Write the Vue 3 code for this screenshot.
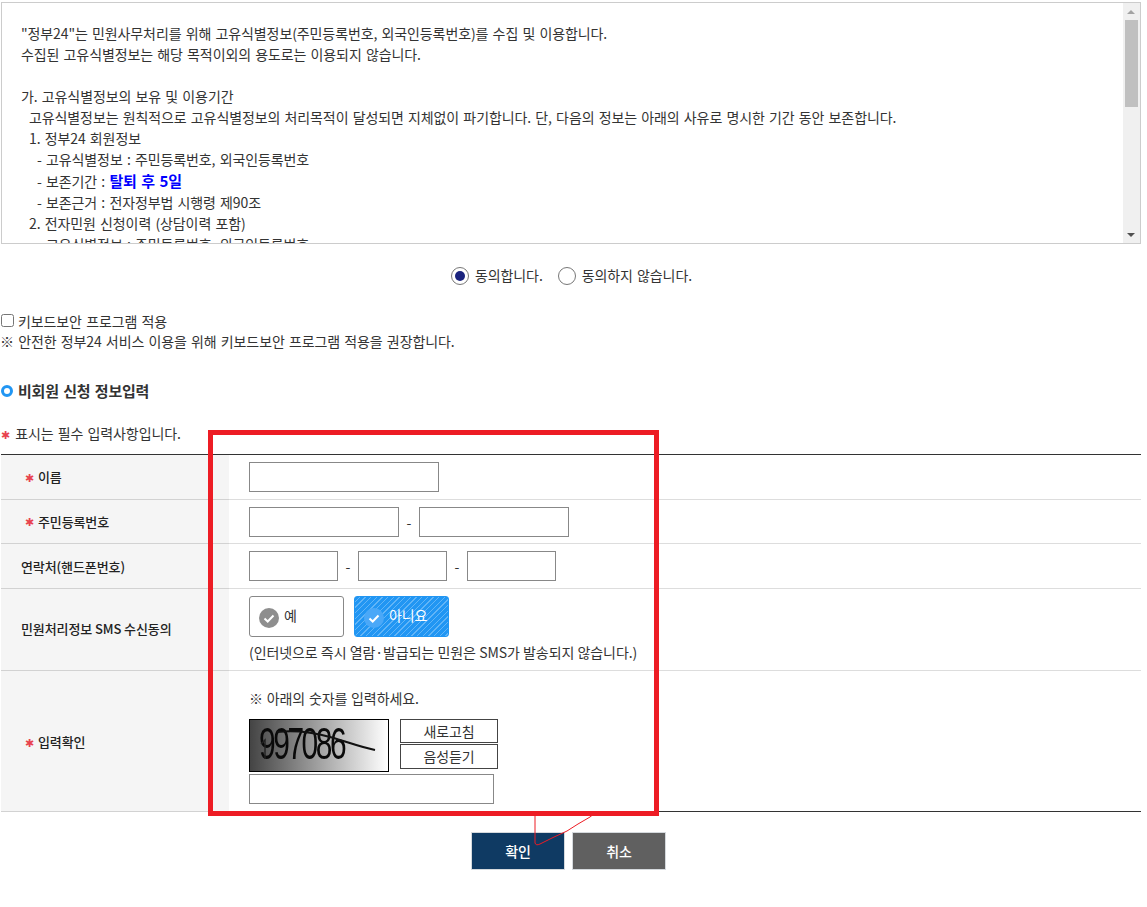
<script setup>
const lines = [
  { t: '"정부24"는 민원사무처리를 위해 고유식별정보(주민등록번호, 외국인등록번호)를 수집 및 이용합니다.', c: '' },
  { t: '수집된 고유식별정보는 해당 목적이외의 용도로는 이용되지 않습니다.', c: '' },
  { t: '\u00a0', c: '' },
  { t: '가. 고유식별정보의 보유 및 이용기간', c: '' },
  { t: '고유식별정보는 원칙적으로 고유식별정보의 처리목적이 달성되면 지체없이 파기합니다. 단, 다음의 정보는 아래의 사유로 명시한 기간 동안 보존합니다.', c: 'i1' },
  { t: '1. 정부24 회원정보', c: 'i1' },
  { t: '- 고유식별정보 : 주민등록번호, 외국인등록번호', c: 'i2' },
  { t: '- 보존기간 : ', b: '탈퇴 후 5일', c: 'i2' },
  { t: '- 보존근거 : 전자정부법 시행령 제90조', c: 'i2' },
  { t: '2. 전자민원 신청이력 (상담이력 포함)', c: 'i1' },
  { t: '- 고유식별정보 : 주민등록번호, 외국인등록번호', c: 'i2' }
]
</script>

<template>
  <div class="page">
    <section class="terms">
      <div class="terms-text">
        <p v-for="(l, i) in lines" :key="i" :class="l.c">{{ l.t }}<strong v-if="l.b" class="hl">{{ l.b }}</strong></p>
      </div>
      <div class="sbar">
        <span class="arrow up"></span>
        <span class="thumb"></span>
        <span class="arrow down"></span>
      </div>
    </section>

    <div class="agree">
      <span class="radio on"></span><span class="rlabel">동의합니다.</span>
      <span class="radio"></span><span class="rlabel">동의하지 않습니다.</span>
    </div>

    <label class="kbd"><input type="checkbox" class="chk" />키보드보안 프로그램 적용</label>
    <p class="kbd-note">※ 안전한 정부24 서비스 이용을 위해 키보드보안 프로그램 적용을 권장합니다.</p>

    <h2 class="title"><span class="ring"></span>비회원 신청 정보입력</h2>
    <p class="req"><span class="star">✱</span> 표시는 필수 입력사항입니다.</p>

    <div class="form">
      <div class="row r1">
        <div class="th req-th"><span class="star">✱</span> 이름</div>
        <div class="td"><input class="inp w190" /></div>
      </div>
      <div class="row r2">
        <div class="th req-th"><span class="star">✱</span> 주민등록번호</div>
        <div class="td"><input class="inp w150" /><span class="dash">-</span><input class="inp w150" /></div>
      </div>
      <div class="row r3">
        <div class="th">연락처(핸드폰번호)</div>
        <div class="td"><input class="inp w89" /><span class="dash">-</span><input class="inp w89" /><span class="dash">-</span><input class="inp w89" /></div>
      </div>
      <div class="row r4">
        <div class="th">민원처리정보 SMS 수신동의</div>
        <div class="td col">
          <div class="choices">
            <div class="choice">
              <span class="tick"><svg viewBox="0 0 20 20" width="20" height="20"><path d="M5.5 10.5l3.2 3 5.8-6" fill="none" stroke="#fff" stroke-width="2"/></svg></span>예
            </div>
            <div class="choice sel">
              <span class="tick"><svg viewBox="0 0 20 20" width="20" height="20"><path d="M5.5 10.5l3.2 3 5.8-6" fill="none" stroke="#fff" stroke-width="2"/></svg></span>아니요
            </div>
          </div>
          <p class="sms">(인터넷으로 즉시 열람·발급되는 민원은 SMS가 발송되지 않습니다.)</p>
        </div>
      </div>
      <div class="row r5">
        <div class="th req-th"><span class="star">✱</span> 입력확인</div>
        <div class="td col">
          <p class="cap-note">※ 아래의 숫자를 입력하세요.</p>
          <div class="cap-row">
            <div class="cap-img">
              <span class="cap-text">997086</span>
              <svg class="cap-line" viewBox="0 0 138 51" width="138" height="51">
                <path d="M27 12C45 10 62 12 80 17S110 27 125 30" fill="none" stroke="#111" stroke-width="2.2"/>
                <path d="M11 24L15 20V39" fill="none" stroke="#222" stroke-width="1.4"/>
              </svg>
            </div>
            <div class="cap-btns">
              <div class="cap-btn">새로고침</div>
              <div class="cap-btn">음성듣기</div>
            </div>
          </div>
          <input class="inp w245" />
        </div>
      </div>
    </div>

    <div class="actions">
      <div class="btn ok">확인</div>
      <div class="btn cancel">취소</div>
    </div>

    <div class="mark"></div>
    <svg class="scribble" viewBox="0 0 70 40" width="70" height="40"><path d="M5 5V34Q6 37 10 35L22 29 37 22 48 15 60 8 65 4" fill="none" stroke="#ed1c24" stroke-width="1"/></svg>
  </div>
</template>

<style>
html, body { margin: 0; background: #fff; }
</style>

<style scoped>
.page {
  position: relative;
  width: 1147px;
  height: 907px;
  overflow: hidden;
  padding-top: 2px;
  box-sizing: border-box;
  font-family: "Noto Sans CJK KR", "Noto Sans", sans-serif;
  font-size: 14px;
  color: #333;
  letter-spacing: -0.1px;
  word-spacing: 1.2px;
}
p, h2 { margin: 0; font-weight: 400; }
.terms {
  margin-left: 1px;
  width: 1140px;
  height: 242px;
  box-sizing: border-box;
  border: 1px solid #ccc;
  display: flex;
  overflow: hidden;
}
.terms-text {
  flex: 1;
  padding: 20px 0 0 19px;
  line-height: 21px;
  white-space: nowrap;
  overflow: hidden;
}
.i1 { padding-left: 8px; }
.i2 { padding-left: 16px; }
.hl { color: #00f; font-size: 15px; font-weight: 700; }
.sbar {
  width: 17px;
  background: #f0f0f0;
  position: relative;
  flex: none;
}
.thumb {
  position: absolute;
  left: 2px;
  top: 17px;
  width: 13px;
  height: 87px;
  background: #c0c0c0;
}
.arrow {
  position: absolute;
  left: 4px;
  width: 0;
  height: 0;
  border-left: 4px solid transparent;
  border-right: 4px solid transparent;
}
.up { top: 7px; border-bottom: 4px solid #a3a3a3; }
.down { bottom: 6px; border-top: 4px solid #505050; }

.agree {
  height: 18px;
  margin-top: 23px;
  margin-left: 451px;
  display: flex;
  align-items: center;
}
.radio {
  width: 18px;
  height: 18px;
  box-sizing: border-box;
  border: 1px solid #777;
  border-radius: 50%;
  background: #fff;
  margin-right: 6px;
  position: relative;
  flex: none;
}
.radio.on::after {
  content: "";
  position: absolute;
  inset: 3px;
  border-radius: 50%;
  background: #1a237e;
}
.rlabel { margin-right: 15px; position: relative; top: -1px; }

.kbd {
  display: flex;
  align-items: center;
  margin-top: 25px;
  height: 21px;
  color: #333;
}
.chk {
  width: 13px;
  height: 13px;
  margin: 0 4px 0 1px;
}
.kbd-note {
  line-height: 21px;
}
.title {
  display: flex;
  align-items: center;
  margin-top: 28px;
  height: 21px;
  font-size: 15px;
  font-weight: 700;
  padding-left: 1px;
  letter-spacing: -0.2px;
}
.ring {
  width: 12px;
  height: 12px;
  box-sizing: border-box;
  border: 3px solid #2196f3;
  border-radius: 50%;
  margin-right: 5px;
}
.req {
  margin-top: 22px;
  line-height: 21px;
}
.star { color: #e8434f; font-size: 11px; }
.req .star { margin-left: 1px; margin-right: 1px; }

.form {
  margin-top: 9px;
  margin-left: 1px;
  width: 1140px;
  border-top: 1px solid #333;
  border-bottom: 1px solid #333;
}
.row {
  display: flex;
  box-sizing: border-box;
  border-bottom: 1px solid #ddd;
}
.row:last-child { border-bottom: 0; }
.r1 { height: 45px; }
.r2 { height: 44px; }
.r3 { height: 45px; }
.r4 { height: 82px; }
.r5 { height: 140px; }
.th {
  width: 228px;
  flex: none;
  display: flex;
  align-items: center;
  padding-left: 20px;
  padding-bottom: 2px;
  box-sizing: border-box;
  background: #f5f5f5;
  font-size: 13px;
  font-weight: 500;
  letter-spacing: -0.1px;
  word-spacing: 0;
  color: #222;
  margin-bottom: -1px;
  box-shadow: inset 0 -1px 0 #d2d2d2;
}
.r3 .th { padding-bottom: 0; }
.r4 .th { padding-bottom: 4px; }
.r5 .th { padding-bottom: 0; }
.req-th { padding-left: 24px; gap: 4px; }
.td {
  flex: 1;
  display: flex;
  align-items: center;
  padding-left: 20px;
}
.col {
  flex-direction: column;
  align-items: flex-start;
  justify-content: flex-start;
}
.inp {
  height: 30px;
  box-sizing: border-box;
  border: 1px solid #888;
  border-radius: 0;
  background: #fff;
  padding: 0;
  margin: 0;
  outline: 0;
}
.w190 { width: 190px; }
.w150 { width: 150px; }
.w89 { width: 89px; }
.w245 { width: 245px; }
.dash { width: 20px; text-align: center; }
.choices {
  display: flex;
  gap: 10px;
  margin-top: 7px;
}
.choice {
  width: 95px;
  height: 41px;
  box-sizing: border-box;
  border: 1px solid #888;
  border-radius: 3px;
  display: flex;
  align-items: center;
  padding-left: 9px;
  padding-bottom: 3px;
  gap: 5px;
  font-size: 14px;
}
.tick {
  width: 20px;
  height: 20px;
  border-radius: 50%;
  background: #8e8e8e;
  margin-top: 5px;
  display: block;
  flex: none;
}
.tick svg { display: block; }
.sel {
  border-color: #2196f3;
  color: #fff;
  background: repeating-linear-gradient(135deg, #2196f3 0 3px, #62b5f7 3px 4px);
}
.sel .tick { background: #4aa8f8; }
.sms { margin-top: 5px; line-height: 20px; word-spacing: 0.3px; }
.cap-note { margin-top: 17px; line-height: 21px; word-spacing: 0.8px; }
.cap-row {
  display: flex;
  gap: 11px;
  margin-top: 10px;
}
.cap-img {
  position: relative;
  width: 140px;
  height: 53px;
  box-sizing: border-box;
  border: 1px solid #000;
  background: linear-gradient(90deg, #444, #fff);
  overflow: hidden;
  font-family: "Liberation Sans", sans-serif;
  font-size: 44px;
  line-height: 51px;
  letter-spacing: -3.6px;
  word-spacing: 0;
  color: #0a0a0a;
  filter: blur(0.5px);
}
.cap-text {
  position: absolute;
  left: 9px;
  top: -2px;
  transform: scaleX(0.68);
  transform-origin: left center;
}
.cap-line { position: absolute; left: 0; top: 0; }
.cap-btns {
  display: flex;
  flex-direction: column;
  gap: 1px;
}
.cap-btn {
  width: 98px;
  box-sizing: border-box;
  border: 1px solid #444;
  height: 24px;
  line-height: 22px;
  text-align: center;
  font-size: 14px;
}
.cap-btn + .cap-btn { height: 25px; }
.w245 { margin-top: 2px; }

.actions {
  display: flex;
  gap: 7px;
  margin-top: 20px;
  margin-left: 471px;
}
.btn {
  width: 94px;
  height: 38px;
  box-sizing: border-box;
  border: 1px solid #d5d9dd;
  color: #fff;
  font-size: 14px;
  font-weight: 500;
  display: flex;
  align-items: center;
  justify-content: center;
}
.ok { background: #0f3a63; }
.cancel { background: #606060; }

.mark {
  position: absolute;
  left: 208px;
  top: 430px;
  width: 451px;
  height: 386px;
  box-sizing: border-box;
  border: 5px solid #ed1c24;
}
.scribble {
  position: absolute;
  left: 530px;
  top: 809px;
}
</style>
